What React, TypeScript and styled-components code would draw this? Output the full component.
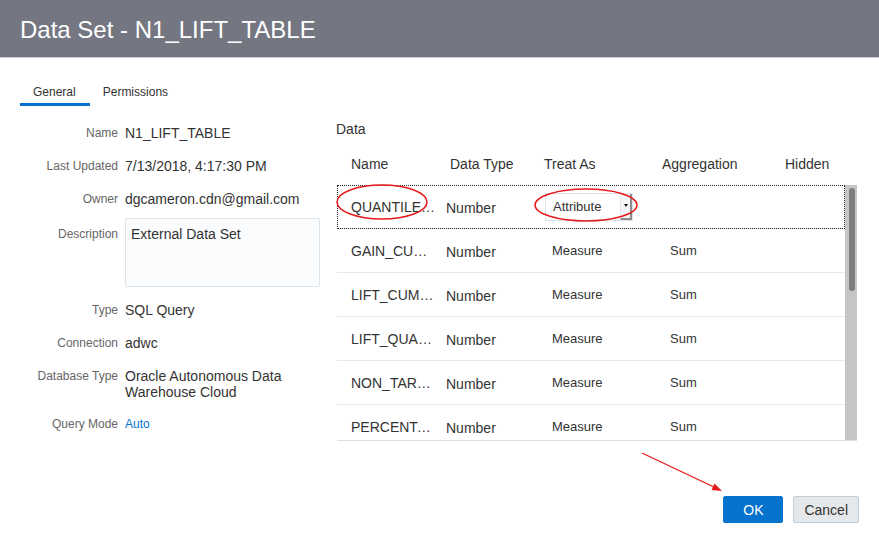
import React from 'react';
import styled, { createGlobalStyle } from 'styled-components';

const GlobalStyle = createGlobalStyle`
  html, body { margin: 0; padding: 0; background: #fff; }
  body { font-family: 'Liberation Sans', Arial, Helvetica, sans-serif; color: #333; }
  * { box-sizing: border-box; }
`;

const Dialog = styled.div`
  position: relative;
  width: 879px;
  height: 543px;
  display: flex;
  flex-direction: column;
  background: #fff;
  overflow: hidden;
`;

const Header = styled.header`
  flex: none;
  height: 58px;
  background: #747682;
  border-bottom: 1px solid #c6cfd8;
  display: flex;
  align-items: center;
  padding: 2px 20px 0;
`;

const Title = styled.h1`
  margin: 0;
  font-size: 24px;
  font-weight: 400;
  line-height: 1;
  color: #fff;
`;

const TabBar = styled.nav`
  flex: none;
  display: flex;
  padding: 0 20px;
  margin-top: 20px;
`;

const Tab = styled.div<{ $active?: boolean }>`
  height: 28px;
  padding: 3px 14px 0 13px;
  line-height: 22px;
  font-size: 12px;
  color: #333;
  border-bottom: 3px solid ${(p) => (p.$active ? '#0572ce' : 'transparent')};
`;

const Main = styled.div`
  flex: 1;
  min-height: 0;
  display: flex;
  padding: 0 20px;
`;

const Form = styled.div`
  flex: none;
  width: 300px;
  padding-top: 19px;
  display: flex;
  flex-direction: column;
  gap: 16px;
`;

const Field = styled.div<{ $mt?: number }>`
  display: grid;
  grid-template-columns: 98px 1fr;
  column-gap: 7px;
  align-items: start;
  margin-top: ${(p) => p.$mt ?? 0}px;
`;

const Label = styled.div<{ $pt?: number }>`
  font-size: 12px;
  line-height: 17px;
  padding-top: ${(p) => p.$pt ?? 0}px;
  color: #666;
  text-align: right;
  white-space: nowrap;
`;

const Value = styled.div<{ $link?: boolean; $lh?: number }>`
  font-size: ${(p) => (p.$link ? 12 : 14)}px;
  line-height: ${(p) => p.$lh ?? 17}px;
  color: ${(p) => (p.$link ? '#0572ce' : '#333')};
`;

const TextBox = styled.div`
  height: 69px;
  border: 1px solid #dde3e7;
  border-radius: 2px;
  background: #fbfcfd;
  padding: 7px 5px;
  font-size: 14px;
  line-height: 17px;
  color: #333;
`;

const DataPanel = styled.section`
  flex: 1;
  margin-left: 16px;
  padding-top: 15px;
  display: flex;
  flex-direction: column;
`;

const DataTitle = styled.div`
  font-size: 14px;
  line-height: 17px;
  color: #333;
  margin-bottom: 6px;
`;

const HeaderRow = styled.div`
  margin-left: 1px;
  height: 41px;
  display: grid;
  grid-template-columns: 99px 94px 118px 123px 1fr;
  align-items: center;
  padding-left: 14px;
  padding-bottom: 2px;
  font-size: 14px;
  color: #333;
`;

const TableBody = styled.div`
  margin-left: 1px;
  width: 520px;
  height: 256px;
  display: flex;
  border-bottom: 1px solid #d9e0e6;
`;

const Rows = styled.div`
  flex: 1;
  overflow: hidden;
`;

const Row = styled.div<{ $focused?: boolean }>`
  height: 44px;
  display: grid;
  grid-template-columns: 95px 99px 117px 1fr;
  align-items: center;
  padding-left: 14px;
  border-bottom: 1px solid #e7eaec;
  outline: ${(p) => (p.$focused ? '1px dotted #222' : 'none')};
  outline-offset: -1px;
`;

const NameCell = styled.div`
  width: 85px;
  font-size: 14px;
  color: #333;
  white-space: nowrap;
  overflow: hidden;
  text-overflow: ellipsis;
`;

const TypeCell = styled.div`
  font-size: 14px;
  color: #333;
  padding-top: 3px;
`;

const SmallCell = styled.div<{ $pl: number }>`
  font-size: 13px;
  color: #333;
  padding-left: ${(p) => p.$pl}px;
  padding-bottom: 1px;
`;

const Select = styled.div`
  width: 88px;
  height: 28px;
  border: 1px solid #dde2e6;
  background: #fff;
  display: flex;
  align-items: stretch;
  padding-left: 7px;
  font-size: 13px;
  color: #333;
`;

const SelectText = styled.span`
  flex: 1;
  display: flex;
  align-items: center;
`;

const SelectButton = styled.div`
  width: 12px;
  background: #f4f5f6;
  border-left: 1px solid #e6e9eb;
  border-right: 2px solid #8a8c8d;
  border-bottom: 2px solid #8a8c8d;
  display: flex;
  align-items: center;
  justify-content: center;
`;

const Caret = styled.span`
  width: 0;
  height: 0;
  border-left: 2.5px solid transparent;
  border-right: 2.5px solid transparent;
  border-top: 3px solid #111;
`;

const Scrollbar = styled.div`
  flex: none;
  width: 12px;
  background: #c4c6c5;
`;

const Thumb = styled.div`
  width: 6px;
  height: 103px;
  margin: 3px 0 0 4px;
  border-radius: 3px;
  background: #7d7f7f;
`;

const Footer = styled.footer`
  flex: none;
  display: flex;
  justify-content: flex-end;
  gap: 10px;
  padding: 0 20px 20px;
`;

const Button = styled.button<{ $primary?: boolean }>`
  height: 27px;
  min-width: ${(p) => (p.$primary ? 60 : 65)}px;
  padding: 0 10px;
  font-family: inherit;
  font-size: 14px;
  border-radius: 2px;
  border: 1px solid ${(p) => (p.$primary ? '#0572ce' : '#c4ced7')};
  background: ${(p) => (p.$primary ? '#0572ce' : '#e4e8ea')};
  color: ${(p) => (p.$primary ? '#fff' : '#333')};
`;

const Annotations = styled.svg`
  position: absolute;
  left: 0;
  top: 0;
  width: 879px;
  height: 543px;
  pointer-events: none;
`;

const fields: { label: string; value: string }[] = [
  { label: 'Name', value: 'N1_LIFT_TABLE' },
  { label: 'Last Updated', value: '7/13/2018, 4:17:30 PM' },
  { label: 'Owner', value: 'dgcameron.cdn@gmail.com' },
];

const rows = [
  { name: 'QUANTILE_NUMBER', treat: 'Attribute', agg: '' },
  { name: 'GAIN_CUMULATIVE', treat: 'Measure', agg: 'Sum' },
  { name: 'LIFT_CUMULATIVE', treat: 'Measure', agg: 'Sum' },
  { name: 'LIFT_QUANTILE', treat: 'Measure', agg: 'Sum' },
  { name: 'NON_TARGETS_CUMULATIVE', treat: 'Measure', agg: 'Sum' },
  { name: 'PERCENTAGE_RECORDS_CUMULATIVE', treat: 'Measure', agg: 'Sum' },
];

export default function App() {
  return (
    <>
      <GlobalStyle />
      <Dialog>
        <Header>
          <Title>Data Set - N1_LIFT_TABLE</Title>
        </Header>
        <TabBar>
          <Tab $active>General</Tab>
          <Tab>Permissions</Tab>
        </TabBar>
        <Main>
          <Form>
            {fields.map((f) => (
              <Field key={f.label}>
                <Label>{f.label}</Label>
                <Value>{f.value}</Value>
              </Field>
            ))}
            <Field $mt={-6}>
              <Label $pt={8}>Description</Label>
              <TextBox>External Data Set</TextBox>
            </Field>
            <Field $mt={-1}>
              <Label>Type</Label>
              <Value>SQL Query</Value>
            </Field>
            <Field>
              <Label>Connection</Label>
              <Value>adwc</Value>
            </Field>
            <Field>
              <Label>Database Type</Label>
              <Value $lh={16}>Oracle Autonomous Data Warehouse Cloud</Value>
            </Field>
            <Field>
              <Label>Query Mode</Label>
              <Value $link>Auto</Value>
            </Field>
          </Form>
          <DataPanel>
            <DataTitle>Data</DataTitle>
            <HeaderRow>
              <span>Name</span>
              <span>Data Type</span>
              <span>Treat As</span>
              <span>Aggregation</span>
              <span>Hidden</span>
            </HeaderRow>
            <TableBody>
              <Rows>
                {rows.map((r, i) => (
                  <Row key={r.name} $focused={i === 0}>
                    <NameCell>{r.name}</NameCell>
                    <TypeCell>Number</TypeCell>
                    {r.treat === 'Attribute' ? (
                      <Select>
                        <SelectText>Attribute</SelectText>
                        <SelectButton>
                          <Caret />
                        </SelectButton>
                      </Select>
                    ) : (
                      <SmallCell $pl={7}>{r.treat}</SmallCell>
                    )}
                    <SmallCell $pl={8}>{r.agg}</SmallCell>
                  </Row>
                ))}
              </Rows>
              <Scrollbar>
                <Thumb />
              </Scrollbar>
            </TableBody>
          </DataPanel>
        </Main>
        <Footer>
          <Button $primary>OK</Button>
          <Button>Cancel</Button>
        </Footer>
        <Annotations viewBox="0 0 879 543">
          <ellipse cx="382" cy="202" rx="45" ry="17" fill="none" stroke="#e51a1a" strokeWidth="1.5" />
          <ellipse cx="586" cy="205" rx="51" ry="16" fill="none" stroke="#e51a1a" strokeWidth="1.5" />
          <line x1="642" y1="453" x2="716" y2="488" stroke="#e51a1a" strokeWidth="1.3" />
          <polygon points="722,491 711.5,489.9 714.5,483.5" fill="#e51a1a" />
        </Annotations>
      </Dialog>
    </>
  );
}
